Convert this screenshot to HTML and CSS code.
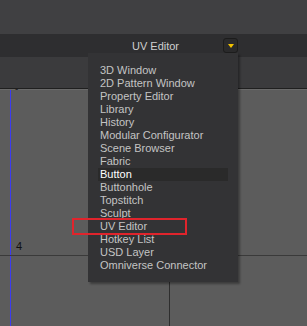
FILE: index.html
```html
<!DOCTYPE html>
<html lang="en">
<head>
  <meta charset="UTF-8">
  <title>UV Editor</title>
  <link rel="stylesheet" href="styles.css">
</head>
<body>

<div id="app">
  <div class="top-area"></div>
  <div class="toolbar">
    <span class="toolbar-title">UV Editor</span>
    <button class="menu-btn"><span class="tri"></span></button>
  </div>
  <div class="sub-panel"></div>
  <div class="canvas">
    <div class="axis-v"></div>
    <div class="tick">-</div>
    <div class="grid-h"></div>
    <div class="grid-v"></div>
    <div class="label">4</div>
  </div>

  <div class="dropdown">
    <ul>
      <li>3D Window</li>
      <li>2D Pattern Window</li>
      <li>Property Editor</li>
      <li>Library</li>
      <li>History</li>
      <li>Modular Configurator</li>
      <li>Scene Browser</li>
      <li>Fabric</li>
      <li class="active">Button</li>
      <li>Buttonhole</li>
      <li>Topstitch</li>
      <li>Sculpt</li>
      <li>UV Editor</li>
      <li>Hotkey List</li>
      <li>USD Layer</li>
      <li>Omniverse Connector</li>
    </ul>
  </div>
  <div class="highlight-box"></div>
</div>

</body>
</html>
```

FILE: styles.css
```css
body {
  margin: 0;
  font-family: "DejaVu Sans", sans-serif;
  background: #5c5c5c;
}

#app {
  position: relative;
  width: 307px;
  height: 326px;
  overflow: hidden;
  display: flex;
  flex-direction: column;
}

.top-area {
  height: 34px;
  background: #404042;
}

.toolbar {
  height: 23px;
  background: #2e2e30;
  display: flex;
  align-items: center;
  justify-content: center;
  position: relative;
}

.toolbar-title {
  color: #cfcfcf;
  font-family: "Liberation Sans", sans-serif;
  font-size: 11px;
  margin-left: 4px;
}

.menu-btn {
  position: absolute;
  left: 223px;
  top: 4px;
  width: 15px;
  height: 15px;
  padding: 0;
  background: #2a2a2b;
  border: 1px solid #1c1c1c;
  border-radius: 3px;
  display: flex;
  align-items: center;
  justify-content: center;
}

.tri {
  width: 0;
  height: 0;
  border-left: 3px solid transparent;
  border-right: 3px solid transparent;
  border-top: 4px solid #f2c200;
}

.sub-panel {
  height: 31px;
  background: #3b3b3d;
  border-bottom: 1px solid #1f1f1f;
}

.canvas {
  flex: 1;
  position: relative;
  background: #5c5c5c;
  border-top: 1px solid #6a6a6a;
}

.axis-v {
  position: absolute;
  left: 10px;
  top: 0;
  bottom: 0;
  width: 1px;
  background: #3c3cf0;
}

.tick {
  position: absolute;
  left: 15px;
  top: -6px;
  font-size: 9px;
  color: #111;
}

.grid-h {
  position: absolute;
  left: 0;
  right: 0;
  top: 165px;
  height: 1px;
  background: #3a3a3a;
}

.grid-v {
  position: absolute;
  left: 169px;
  top: 165px;
  bottom: 0;
  width: 1px;
  background: #2e2e2e;
}

.label {
  position: absolute;
  left: 16px;
  top: 150px;
  font-family: "Liberation Sans", sans-serif;
  font-size: 11px;
  color: #111;
}

.dropdown {
  position: absolute;
  left: 88px;
  top: 53px;
  width: 150px;
  height: 229px;
  background: #333335;
  box-shadow: 2px 2px 2px rgba(0, 0, 0, 0.35);
}

.dropdown ul {
  list-style: none;
  margin: 0;
  padding: 11px 10px 0 10px;
}

.dropdown li {
  height: 13px;
  line-height: 13px;
  padding-left: 2px;
  color: #c4c4c4;
  font-family: "Liberation Sans", sans-serif;
  font-size: 11px;
}

.dropdown li.active {
  background: #2a2a2a;
  color: #ffffff;
}

.highlight-box {
  position: absolute;
  left: 72px;
  top: 218px;
  width: 111px;
  height: 13px;
  border: 2px solid #e0242c;
}
```
